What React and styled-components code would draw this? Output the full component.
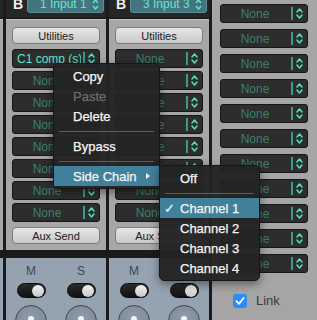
import React from "react";
import styled, { createGlobalStyle } from "styled-components";

const GlobalStyle = createGlobalStyle`
  html, body {
    margin: 0;
    padding: 0;
    background: #1b1b1b;
    font-family: "Liberation Sans", Arial, sans-serif;
  }
`;

const Page = styled.div`
  position: relative;
  width: 317px;
  height: 320px;
  overflow: hidden;
  display: flex;
  gap: 3px;
  background: #1b1b1b;
`;

const Strip = styled.div`
  width: ${(p) => p.width}px;
  flex-shrink: 0;
  display: flex;
  flex-direction: column;
  overflow: hidden;
`;

const Header = styled.div`
  height: 19px;
  flex-shrink: 0;
  background: #262626;
  border-bottom: 1px solid #121212;
  display: flex;
  align-items: flex-end;
  padding: 0 0 6px 7px;
  box-sizing: border-box;
  gap: 4px;
  overflow: hidden;
`;

const BusLetter = styled.span`
  color: #f2f2f2;
  font-weight: bold;
  font-size: 14px;
  line-height: 14px;
  width: 10px;
  margin-bottom: 1px;
`;

const InputSelect = styled.div`
  width: 77px;
  height: 19px;
  margin-bottom: -1px;
  flex-shrink: 0;
  box-sizing: border-box;
  border-radius: 3px;
  background: #44747e;
  border: 1px solid #5b8c95;
  color: #62e6cf;
  font-size: 12px;
  display: flex;
  align-items: flex-end;
  justify-content: space-between;
  padding: 0 4px 1px 12px;
`;

const Body = styled.div`
  height: 231px;
  flex-shrink: 0;
  background: #a7a7a7;
  border-top: 1px solid #c2c2c2;
  box-sizing: border-box;
  padding: 7px 6px 5px;
  display: flex;
  flex-direction: column;
  gap: 5px;
`;

const Button = styled.div`
  height: 17px;
  flex-shrink: 0;
  box-sizing: border-box;
  border: 1px solid #7b7b7b;
  border-radius: 4px;
  background: linear-gradient(#e6e6e6, #c9c9c9);
  color: #222;
  font-size: 11px;
  display: flex;
  align-items: center;
  justify-content: center;
`;

const SlotList = styled.div`
  display: flex;
  flex-direction: column;
  flex-shrink: 0;
  gap: ${(p) => p.gap}px;
`;

const SlotBox = styled.div`
  height: 19px;
  flex-shrink: 0;
  box-sizing: border-box;
  background: #2d2d2d;
  border: 1px solid #161616;
  border-radius: 3px;
  display: flex;
  align-items: center;
  font-size: 12px;
`;

const SlotText = styled.span`
  flex: 1;
  white-space: nowrap;
  overflow: hidden;
  text-align: ${(p) => (p.active ? "left" : "center")};
  padding-left: ${(p) => (p.active ? 4 : 0)}px;
  color: ${(p) => (p.active ? "#5ee6cc" : "#3b806d")};
`;

const SlotBar = styled.span`
  width: 2px;
  height: 13px;
  background: #3a9c86;
  margin: 0 3px 0 2px;
`;

const Chevrons = styled.svg`
  width: 7px;
  height: 13px;
  margin-right: ${(p) => (p.tight ? 0 : 4)}px;
  flex-shrink: 0;
`;

const Bottom = styled.div`
  flex: 1;
  min-height: 0;
  margin-top: 8px;
  background: #95a3b1;
  display: grid;
  grid-template-columns: 1fr 1fr;
  align-content: start;
  justify-items: center;
  padding-top: 6px;
  overflow: hidden;
`;

const Channel = styled.div`
  display: flex;
  flex-direction: column;
  align-items: center;
`;

const Label = styled.span`
  color: #3d4750;
  font-size: 12px;
  line-height: 14px;
  height: 16px;
`;

const Toggle = styled.div`
  width: 29px;
  height: 15px;
  box-sizing: border-box;
  border-radius: 8px;
  background: linear-gradient(#2b2b2b, #111);
  border: 1px solid #0c0c0c;
  display: flex;
  justify-content: flex-end;
  align-items: center;
  padding-right: 1px;
  margin-top: 3px;
`;

const ToggleKnob = styled.span`
  width: 12px;
  height: 12px;
  border-radius: 50%;
  background: linear-gradient(#f2f2f2, #c8c8c8);
`;

const Knob = styled.div`
  position: relative;
  flex-shrink: 0;
  width: 32px;
  height: 32px;
  margin-top: 7px;
  box-sizing: border-box;
  border-radius: 50%;
  border: 1px solid #3c4650;
  background: radial-gradient(circle at 50% 40%, #8f9cab, #76838f);
`;

const KnobDot = styled.span`
  position: absolute;
  left: 12px;
  top: 10px;
  width: 6px;
  height: 6px;
  border-radius: 50%;
  background: #f4f4f4;
`;

const Panel = styled.div`
  flex: 1;
  background: #a5a5a5;
  padding: 4px 9px 0 8px;
  display: flex;
  flex-direction: column;
`;

const LinkRow = styled.div`
  display: flex;
  align-items: center;
  gap: 9px;
  margin-top: 20px;
  padding-left: 13px;
  color: #3a3a3a;
  font-size: 13px;
`;

const CheckBox = styled.span`
  width: 14px;
  height: 14px;
  border-radius: 3px;
  background: #2b8cf3;
  display: flex;
  align-items: center;
  justify-content: center;
`;

const Menu = styled.div`
  position: absolute;
  left: ${(p) => p.left}px;
  top: ${(p) => p.top}px;
  width: ${(p) => p.width}px;
  box-sizing: border-box;
  padding: 2px 0;
  background: rgba(36, 36, 36, 0.97);
  border: 1px solid #161616;
  border-radius: 5px;
  box-shadow: 0 3px 10px rgba(0, 0, 0, 0.45);
  color: #f5f5f5;
  font-size: 13px;
  -webkit-text-stroke: 0.25px currentColor;
`;

const Item = styled.div`
  position: relative;
  height: 20px;
  display: flex;
  align-items: center;
  padding-left: ${(p) => p.indent}px;
  color: ${(p) => (p.disabled ? "#6d6d6d" : "#f5f5f5")};
  background: ${(p) => (p.highlight ? "#41809a" : "transparent")};
`;

const Separator = styled.div`
  height: 1px;
  margin: 5px 5px 4px;
  background: #5e5e5e;
`;

const SubArrow = styled.span`
  position: absolute;
  right: 9px;
  top: 7px;
  width: 0;
  height: 0;
  border-top: 3px solid transparent;
  border-bottom: 3px solid transparent;
  border-left: 4px solid #f5f5f5;
`;

const Check = styled.span`
  position: absolute;
  left: 4px;
`;

const chevronPath = "M1 5 L3.5 2 L6 5 M1 8 L3.5 11 L6 8";

const Slot = ({ name }) => (
  <SlotBox>
    <SlotText active={!!name}>{name || "None"}</SlotText>
    <SlotBar />
    <Chevrons viewBox="0 0 7 13">
      <path
        d={chevronPath}
        fill="none"
        stroke="#4fe3c3"
        strokeWidth="1.5"
        strokeLinecap="round"
        strokeLinejoin="round"
      />
    </Chevrons>
  </SlotBox>
);

const MixerStrip = ({ input, first }) => (
  <Strip width={100}>
    <Header>
      <BusLetter>B</BusLetter>
      <InputSelect>
        <span>{input}</span>
        <Chevrons viewBox="0 0 7 13" tight>
          <path d={chevronPath} fill="none" stroke="#62e6cf" strokeWidth="1.4" />
        </Chevrons>
      </InputSelect>
    </Header>
    <Body>
      <Button>Utilities</Button>
      <SlotList gap={3}>
        {Array.from({ length: 8 }).map((_, i) => (
          <Slot key={i} name={first && i === 0 ? "C1 comp (s)" : null} />
        ))}
      </SlotList>
      <Button>Aux Send</Button>
    </Body>
    <Bottom>
      {["M", "S"].map((l) => (
        <Channel key={l}>
          <Label>{l}</Label>
          <Toggle>
            <ToggleKnob />
          </Toggle>
          <Knob>
            <KnobDot />
          </Knob>
        </Channel>
      ))}
    </Bottom>
  </Strip>
);

const Sliver = () => (
  <Strip width={3}>
    <Header />
    <Body />
    <Bottom />
  </Strip>
);

export default function App() {
  return (
    <>
      <GlobalStyle />
      <Page>
        <Sliver />
        <MixerStrip input="1 Input 1" first />
        <MixerStrip input="3 Input 3" />
        <Panel>
          <SlotList gap={6}>
            {Array.from({ length: 11 }).map((_, i) => (
              <Slot key={i} />
            ))}
          </SlotList>
          <LinkRow>
            <CheckBox>
              <svg width="10" height="10" viewBox="0 0 10 10">
                <path
                  d="M1.5 5.2 L4 7.8 L8.6 2"
                  fill="none"
                  stroke="#fff"
                  strokeWidth="1.8"
                  strokeLinecap="round"
                  strokeLinejoin="round"
                />
              </svg>
            </CheckBox>
            Link
          </LinkRow>
        </Panel>

        <Menu left={53} top={63} width={107}>
          <Item indent={19}>Copy</Item>
          <Item indent={19} disabled>
            Paste
          </Item>
          <Item indent={19}>Delete</Item>
          <Separator />
          <Item indent={19}>Bypass</Item>
          <Separator />
          <Item indent={19} highlight>
            Side Chain
            <SubArrow />
          </Item>
        </Menu>

        <Menu left={159} top={165} width={101}>
          <Item indent={20}>Off</Item>
          <Separator />
          <Item indent={20} highlight>
            <Check>✓</Check>
            Channel 1
          </Item>
          <Item indent={20}>Channel 2</Item>
          <Item indent={20}>Channel 3</Item>
          <Item indent={20}>Channel 4</Item>
        </Menu>
      </Page>
    </>
  );
}
